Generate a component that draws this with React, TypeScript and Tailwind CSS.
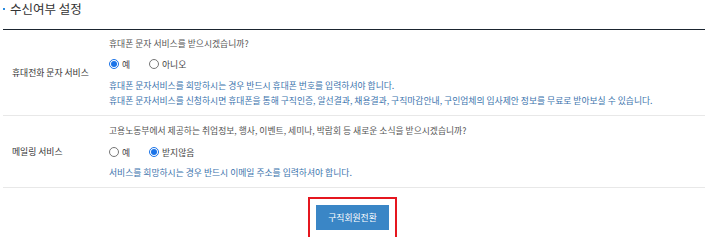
import React from "react";

const font = { fontFamily: '"Noto Sans CJK KR", "Noto Sans", sans-serif' };

function Radio({ checked, label }: { checked?: boolean; label: string }) {
  return (
    <label className="flex items-center gap-[3px] min-w-[40px] shrink-0 whitespace-nowrap">
      {checked ? (
        <span className="w-[10px] h-[10px] rounded-full border border-[#1a73e8] flex items-center justify-center">
          <span className="w-[6px] h-[6px] rounded-full bg-[#1a73e8]" />
        </span>
      ) : (
        <span className="w-[10px] h-[10px] rounded-full border border-[#767676] bg-white" />
      )}
      <span className="text-[#444]">{label}</span>
    </label>
  );
}

export default function App() {
  return (
    <div
      className="w-[707px] h-[237px] bg-white overflow-hidden text-[8.8px] leading-[15px]"
      style={font}
    >
      {/* title */}
      <div className="h-[29px] flex items-start pl-[3px] pt-[1px]">
        <div className="flex items-center gap-[5px] h-[15px]">
          <span className="w-[2px] h-[2px] bg-[#2a8be0]" />
          <h2 className="text-[12.5px] leading-[15px] text-[#333]">수신여부 설정</h2>
        </div>
      </div>

      <div className="mx-[3px] w-[702px] border-t border-[#1b2530]">
        {/* SMS row */}
        <div className="h-[86px] flex border-b border-[#e8e8e8]">
          <div className="w-[106px] pl-[9px] flex items-center text-[#333]">
            휴대전화 문자 서비스
          </div>
          <div className="flex flex-col pt-[6px]">
            <p className="text-[#555]">휴대폰 문자 서비스를 받으시겠습니까?</p>
            <div className="flex h-[14px] items-center mt-[6px]">
              <Radio checked label="예" />
              <Radio label="아니오" />
            </div>
            <p className="text-[#3c74ad] mt-[7px]">
              휴대폰 문자서비스를 희망하시는 경우 반드시 휴대폰 번호를 입력하셔야 합니다.
            </p>
            <p className="text-[#3c74ad]">
              휴대폰 문자서비스를 신청하시면 휴대폰을 통해 구직인증, 알선결과, 채용결과, 구직마감안내, 구인업체의 입사제안 정보를 무료로 받아보실 수 있습니다.
            </p>
          </div>
        </div>

        {/* mailing row */}
        <div className="h-[72px] flex border-b border-[#e8e8e8]">
          <div className="w-[106px] pl-[9px] flex items-center text-[#333]">메일링 서비스</div>
          <div className="flex flex-col pt-[7px]">
            <p className="text-[#555]">
              고용노동부에서 제공하는 취업정보, 행사, 이벤트, 세미나, 박람회 등 새로운 소식을 받으시겠습니까?
            </p>
            <div className="flex h-[14px] items-center mt-[7px]">
              <Radio label="예" />
              <Radio checked label="받지않음" />
            </div>
            <p className="text-[#3c74ad] mt-[6px]">
              서비스를 희망하시는 경우 반드시 이메일 주소를 입력하셔야 합니다.
            </p>
          </div>
        </div>
      </div>

      {/* button */}
      <div className="flex justify-center mt-[9px] pr-[2px]">
        <div className="border-2 border-[#e5161f] px-[6px] pt-[6px] pb-[8px]">
          <button className="w-[73px] h-[25px] bg-[#3a86c6] text-white text-[8.8px]">
            구직회원전환
          </button>
        </div>
      </div>
    </div>
  );
}
